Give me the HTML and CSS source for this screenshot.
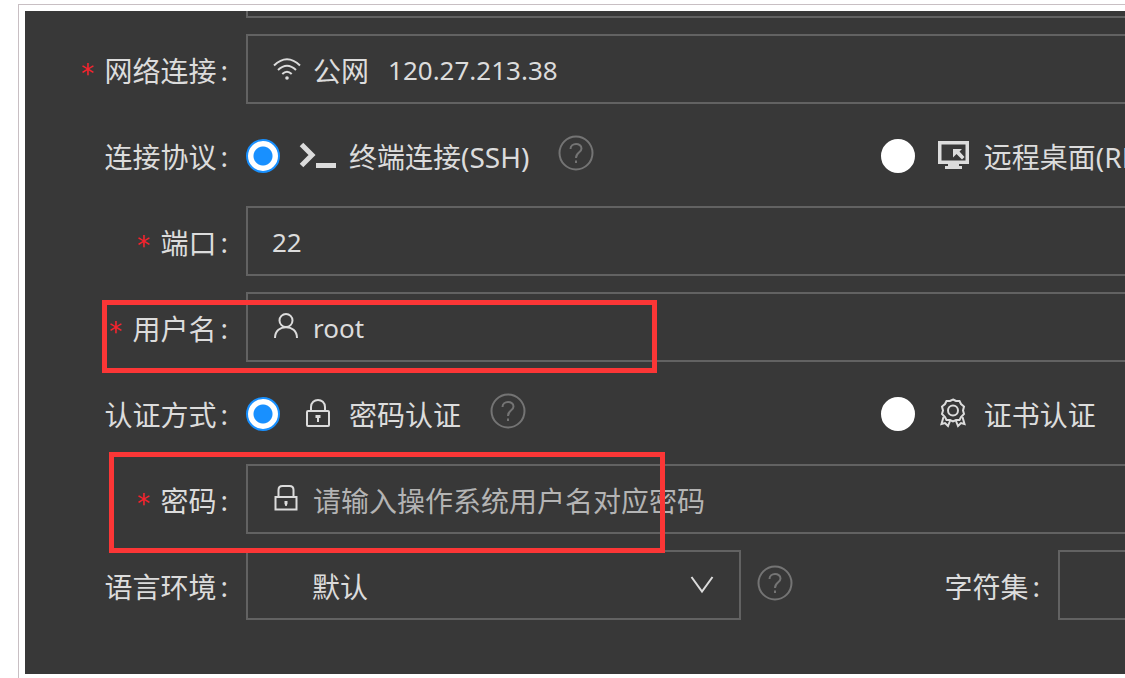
FILE: index.html
```html
<!DOCTYPE html>
<html lang="zh-CN">
<head>
    <meta charset="UTF-8">
    <meta name="viewport" content="width=device-width, initial-scale=1.0">
    <title>连接设置</title>
    <link rel="stylesheet" href="styles.css">
</head>
<body>
    <div class="frame">
        <form class="panel">
            <!-- scrolled mostly out of view -->
            <div class="row row-cut">
                <div class="label"></div>
                <div class="field"></div>
            </div>

            <div class="row">
                <div class="label required" id="networkLabel">网络连接</div>
                <button type="button" class="field" aria-describedby="networkLabel">
                    <svg class="icon" viewBox="0 0 30 30" fill="none" stroke="currentColor" stroke-width="2">
                        <path d="M2 11.5Q15 -1 28 11.5M6 16Q15 7.5 24 16M10.3 20Q15 15.5 19.7 20"/>
                        <circle cx="15" cy="24" r="1.8" fill="currentColor" stroke="none"/>
                    </svg>
                    <span>公网</span>
                    <span class="latin ip">120.27.213.38</span>
                </button>
            </div>

            <div class="row">
                <div class="label">连接协议</div>
                <div class="options">
                    <div class="option">
                        <input type="radio" name="protocol" id="ssh" checked>
                        <svg class="option-icon" viewBox="0 0 38 30" fill="none" stroke="currentColor">
                            <path d="M2.500 4.500L13 15L2.500 25.500" stroke-width="5"/>
                            <path d="M17 25.500H37" stroke-width="5"/>
                        </svg>
                        <label for="ssh">终端连接<span class="paren">(SSH)</span></label>
                        <svg class="help" viewBox="0 0 36 36" fill="none" stroke="currentColor" stroke-width="2">
                            <circle cx="18" cy="18" r="16.500"/>
                            <path d="M12.500 14C12.500 7.500 23.500 7.500 23.500 13.500C23.500 17.500 18 17 18 23M18 25.500V28"/>
                        </svg>
                    </div>
                    <div class="option">
                        <input type="radio" name="protocol" id="rdp">
                        <svg class="option-icon" viewBox="0 0 38 30">
                            <path d="M4 1H35V24H4ZM7.500 4.500V20.500H31.500V4.500Z" fill="currentColor" fill-rule="evenodd"/>
                            <path d="M14 24H25V26H28V29H11V26H14ZM19 9H28L25.500 11.500L30.500 17L28 19.500L22.500 14L19 17.500Z" fill="currentColor"/>
                        </svg>
                        <label for="rdp">远程桌面<span class="paren">(RDP)</span></label>
                    </div>
                </div>
            </div>

            <div class="row">
                <label class="label required" for="port">端口</label>
                <div class="field">
                    <input type="text" class="latin" id="port" value="22">
                </div>
            </div>

            <div class="row">
                <label class="label required" for="username">用户名</label>
                <div class="field">
                    <svg class="icon" viewBox="0 0 30 30" fill="none" stroke="currentColor" stroke-width="2">
                        <circle cx="14" cy="8.500" r="6.500"/>
                        <path d="M3 26C3 11.500 25 11.500 25 26"/>
                    </svg>
                    <input type="text" class="latin" id="username" value="root">
                </div>
            </div>

            <div class="row">
                <div class="label">认证方式</div>
                <div class="options">
                    <div class="option">
                        <input type="radio" name="auth" id="authPassword" checked>
                        <svg class="option-icon" viewBox="0 0 38 30" fill="none" stroke="currentColor" stroke-width="2">
                            <rect x="8" y="13" width="22" height="15" rx="1"/>
                            <path d="M12 13V9C12 -0.500 26 -0.500 26 9V13"/>
                            <path d="M16.500 17H21.500V20H20V24H18V20H16.500Z" fill="currentColor" stroke="none"/>
                        </svg>
                        <label for="authPassword">密码认证</label>
                        <svg class="help" viewBox="0 0 36 36" fill="none" stroke="currentColor" stroke-width="2">
                            <circle cx="18" cy="18" r="16.500"/>
                            <path d="M12.500 14C12.500 7.500 23.500 7.500 23.500 13.500C23.500 17.500 18 17 18 23M18 25.500V28"/>
                        </svg>
                    </div>
                    <div class="option">
                        <input type="radio" name="auth" id="authCert">
                        <svg class="option-icon" viewBox="0 0 38 30" fill="none" stroke="currentColor" stroke-width="2">
                            <circle cx="19" cy="12.500" r="5"/>
                            <path d="M19 1.500L22 3L25.500 3L27 6L30 8.500L29 12.500L30 16L27 19L25.500 22L22 22L19 23.500L16 22L12.500 22L11 19L8 16L9 12.500L8 8.500L11 6L12.500 3L16 3Z"/>
                            <path d="M9.500 19L7.500 26L11 25L14 28L16 23M28.500 19L30.500 26L27 25L24 28L22 23"/>
                        </svg>
                        <label for="authCert">证书认证</label>
                    </div>
                </div>
            </div>

            <div class="row">
                <label class="label required" for="password">密码</label>
                <div class="field">
                    <svg class="icon" viewBox="0 0 30 30" fill="none" stroke="currentColor" stroke-width="2">
                        <rect x="3.500" y="13" width="21" height="12.500"/>
                        <path d="M6.500 13V6Q6.500 2 10.500 2H17.500Q21.500 2 21.500 6V13"/>
                        <path d="M12.500 17H15.500V19.500L14.700 22H13.300L12.500 19.500Z" fill="currentColor" stroke="none"/>
                    </svg>
                    <input type="password" id="password" placeholder="请输入操作系统用户名对应密码">
                </div>
            </div>

            <div class="row">
                <label class="label" for="language">语言环境</label>
                <div class="locale">
                    <div class="select">
                        <select id="language">
                            <option>默认</option>
                        </select>
                        <svg class="arrow" viewBox="0 0 24 18" fill="none" stroke="currentColor" stroke-width="2">
                            <path d="M1.500 1L12 15.500L22.500 1"/>
                        </svg>
                    </div>
                    <svg class="help" viewBox="0 0 36 36" fill="none" stroke="currentColor" stroke-width="2">
                        <circle cx="18" cy="18" r="16.500"/>
                        <path d="M12.500 14C12.500 7.500 23.500 7.500 23.500 13.500C23.500 17.500 18 17 18 23M18 25.500V28"/>
                    </svg>
                    <label class="label" for="charset">字符集</label>
                    <div class="field">
                        <input type="text" id="charset">
                    </div>
                </div>
            </div>

            <div class="mark mark-username"></div>
            <div class="mark mark-password"></div>
        </form>
    </div>
</body>
</html>
```
FILE: styles.css
```css
* {
    box-sizing: border-box;
}
body {
    margin: 0;
    padding: 4px 0 0 18px;
    background-color: #fff;
    font-family: "Noto Sans CJK SC", sans-serif;
    font-size: 28px;
    line-height: 40px;
    color: #dcdcdc;
}
.frame {
    min-height: calc(100vh - 4px);
    padding: 6px 0 0 6px;
    border-top: 1px solid #c8bfc3;
    border-left: 1px solid #c8bfc3;
}
.panel {
    position: relative;
    overflow: hidden;
    display: flex;
    flex-direction: column;
    gap: 16px;
    padding-bottom: 54px;
    background-color: #383838;
    white-space: nowrap;
}
.row {
    display: flex;
    height: 70px;
}
.row-cut {
    margin-top: -63px;
}
.label {
    flex: none;
    display: flex;
    justify-content: flex-end;
    align-items: center;
    width: 221px;
    padding: 2px 18px 0 0;
}
.row .label:not(:empty)::after {
    content: ":";
    margin-left: 4px;
    font-family: "Noto Sans", sans-serif;
}
.required::before {
    content: "*";
    margin: 8px 9px 0 0;
    font-family: "DejaVu Sans Mono", monospace;
    font-size: 26px;
    color: #f5222d;
}
.field {
    flex: 1;
    display: flex;
    align-items: center;
    min-width: 0;
    padding: 0 0 0 24px;
    border: 2px solid #626262;
    border-right: none;
    border-radius: 0;
    background: none;
    font: inherit;
    color: inherit;
}
.field span,
.field input {
    padding: 2px 0 0;
}
.field input {
    flex: 1;
    min-width: 0;
    height: 100%;
    border: none;
    outline: none;
    background: none;
    font: inherit;
    color: inherit;
}
.field input::placeholder {
    color: #b4b4b4;
    opacity: 1;
}
.latin,
.field .latin {
    font-family: "Noto Sans", sans-serif;
    font-size: 26px;
}
.paren {
    font-family: "Noto Sans", sans-serif;
}
.icon {
    flex: none;
    width: 30px;
    height: 30px;
    margin-right: 11px;
}
.ip {
    margin-left: 19px;
}
.options {
    flex: 1;
    display: grid;
    grid-template-columns: minmax(0, 13fr) minmax(0, 5fr);
}
.option {
    display: flex;
    align-items: center;
}
.option label {
    padding-top: 2px;
}
.option input {
    flex: none;
    appearance: none;
    width: 34px;
    height: 34px;
    margin: 2px 19px 0 0;
    border: 2px solid #fff;
    border-radius: 50%;
    background-color: #fff;
}
.option input:checked {
    border-color: #1890ff;
    background-image: radial-gradient(circle, #1890ff 9px, #fff 10px);
}
.option-icon {
    flex: none;
    width: 38px;
    height: 30px;
    margin-right: 12px;
}
.help {
    flex: none;
    width: 36px;
    height: 36px;
    margin-bottom: 4px;
    color: #747474;
}
.option .help {
    margin-left: 29px;
}
.locale {
    flex: 1;
    display: flex;
    align-items: center;
    min-width: 0;
}
.select {
    flex: none;
    position: relative;
    width: 495px;
    height: 70px;
}
.select select {
    appearance: none;
    width: 100%;
    height: 100%;
    padding: 2px 64px 0 64px;
    border: 2px solid #626262;
    border-radius: 0;
    background: none;
    font: inherit;
    color: inherit;
}
.arrow {
    position: absolute;
    top: 26px;
    right: 27px;
    width: 24px;
    height: 18px;
    pointer-events: none;
}
.locale .help {
    margin-left: 16px;
}
.locale .label {
    width: 265px;
}
.locale .field {
    height: 70px;
}
/* red highlight boxes */
.mark {
    position: absolute;
    border: 5px solid #fb3636;
    pointer-events: none;
}
.mark-username {
    top: 289px;
    left: 77px;
    width: 555px;
    height: 73px;
}
.mark-password {
    top: 441px;
    left: 84px;
    width: 556px;
    height: 101px;
}
```
